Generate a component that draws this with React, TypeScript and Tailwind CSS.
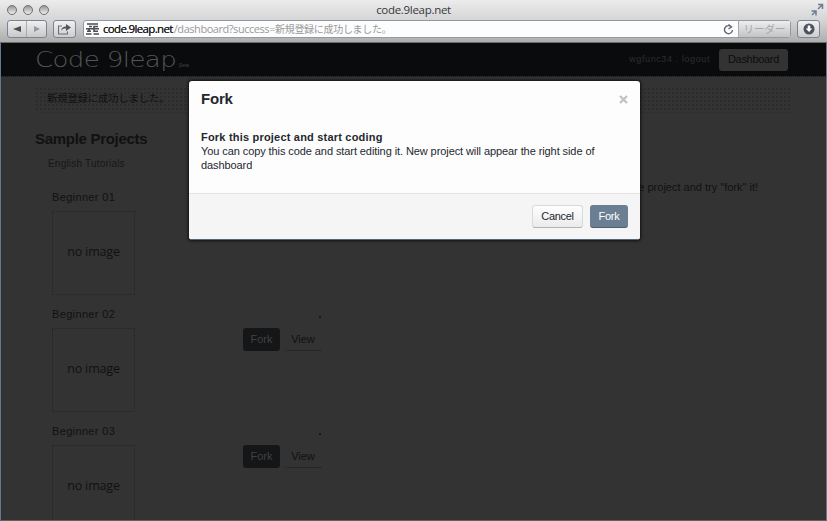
import React from 'react';

const helv = "font-['Liberation_Sans','Noto_Sans_CJK_JP',sans-serif]";
const lucida = "font-['Open_Sans','Noto_Sans_CJK_JP',sans-serif]";

function Chrome() {
  return (
    <header className={`${lucida} flex h-[43px] shrink-0 flex-col border-b border-[#6c6c6c] bg-linear-to-b from-[#ececec] via-[#d4d4d4] to-[#aeaeae]`}>
      <div className="flex h-5 shrink-0 items-center pr-[3px] pl-[7px]">
        <div className="flex w-[60px] gap-[6px]">
          {[0, 1, 2].map((n) => (
            <span key={n} className="h-[10px] w-[10px] rounded-full border-[1.5px] border-[#6d7176] bg-linear-to-b from-[#999] to-[#eee]" />
          ))}
        </div>
        <span className="flex-1 pr-[18px] text-center text-[11.5px] leading-5 font-medium tracking-[-0.3px] text-[#36383d]">code.9leap.net</span>
        <svg width="14" height="14" viewBox="0 0 14 14" className="ml-[32px]" fill="none" stroke="#6e7d91" strokeWidth="1.5">
          <path d="M8 6l4-4M8 1.5h4.5V6M6 8l-4 4M1.5 8H6v4.5" />
        </svg>
      </div>
      <div className="flex h-[18px] items-center px-[7px]">
        <div className="flex h-[18px] w-10 rounded-[3px] border border-[#75859a] bg-linear-to-b from-[#efefef] to-[#c9c9c9]">
          <span className="flex flex-1 items-center justify-center border-r border-[#aaa]">
            <svg width="8" height="8" viewBox="0 0 8 8"><path d="M8 1v6L0 4z" fill="#4a5058" /></svg>
          </span>
          <span className="flex flex-1 items-center justify-center">
            <svg width="8" height="8" viewBox="0 0 8 8"><path d="M1 1v6l6-3z" fill="#929aa3" /></svg>
          </span>
        </div>
        <div className="ml-[6px] flex h-[18px] w-[23px] items-center justify-center rounded-[3px] border border-[#75859a] bg-linear-to-b from-[#f0f0f0] to-[#cecece]">
          <svg width="15" height="12" viewBox="0 0 15 12" fill="none" stroke="#687079" strokeWidth="1.1">
            <path d="M5 3H1.500v8h9V8.500" />
            <path d="M4 8c.4-3 2-4.500 5-4.500V1l5 3.500L9 8V5.500C6.500 5.500 5 6 4 8z" fill="#4f555e" stroke="none" />
          </svg>
        </div>
        <div className="ml-[7px] flex h-[18px] w-[709px] items-center rounded-[3px] border border-[#8e9aaa] bg-[#fdfdfd]">
          <svg width="13" height="12" viewBox="0 0 13 12" className="ml-[2px]" fill="none" stroke="#4a4d52" strokeWidth="1.6">
            <path d="M1 1h11M3 3.500h3M0 5.800h13M3 5.500v2.500M1 8.300h4M0 11h5.500" />
            <path d="M12 3.500H8v2M12 8.300H8V6M7.500 11H13" />
          </svg>
          <span className="ml-[4px] flex items-center text-[11.5px] leading-4 whitespace-nowrap text-[#222]">
            <span className="tracking-[-0.65px] [text-shadow:0_0_0.5px_#222]">code.9leap.net</span>
            <span className="ml-px text-[11px] tracking-[-0.45px] text-[#999]">/dashboard?success=</span>
            <span className="text-[10px] tracking-[-0.3px] text-[#999]">新規登録に成功しました。</span>
          </span>
          <svg width="11" height="11" viewBox="0 0 11 11" className="ml-auto" fill="none" stroke="#596675" strokeWidth="1.400">
            <path d="M8.500 3A4 4 0 1 0 9.500 6M5.500 .5L8.500 3 5.500 5" />
          </svg>
          <span className="ml-[4px] flex h-4 w-[52px] items-center justify-center border-l border-[#aaa] bg-linear-to-b from-[#eee] to-[#c4c4c4] text-[10.5px] leading-none text-[#a4a8ac]">リーダー</span>
        </div>
        <div className="ml-[6px] flex h-[18px] w-[23px] items-center justify-center rounded-[3px] border border-[#75859a] bg-linear-to-b from-[#f0f0f0] to-[#cecece]">
          <svg width="12" height="12" viewBox="0 0 12 12">
            <circle cx="6" cy="6" r="5.500" fill="#4c535d" />
            <path d="M4.700 2.500h2.600v3h2L6 9 2.700 5.500h2z" fill="#fff" />
          </svg>
        </div>
      </div>
    </header>
  );
}

function Navbar() {
  return (
    <nav className="flex h-[33px] shrink-0 items-center bg-[#0a0b0c] pr-[38px] pl-[34px]">
      <span className="flex w-[144px] items-center font-['DejaVu_Sans',sans-serif] text-[21px] leading-[30px] font-extralight tracking-[-0.5px] text-[#555]">
        <span className="origin-left scale-x-[1.24] whitespace-nowrap">Code 9leap</span>
      </span>
      <span className="mt-3 text-[5px] text-[#444]">βeta</span>
      <span className="ml-auto text-[9px] tracking-[0.6px] whitespace-nowrap text-[#2e2e2e]">wgfunc34 . logout</span>
      <button className="ml-[9px] h-[22px] w-[69px] rounded-[3px] bg-[#333] text-[11px] tracking-[-0.3px] text-[#0d0d0d]">Dashboard</button>
    </nav>
  );
}

function Project({ id, actions }: { id: string; actions: boolean }) {
  return (
    <div className="flex h-[117px] shrink-0">
      <div className="w-[191px]">
        <h3 className="text-[11px] leading-4 tracking-[0.35px] text-[#101112]">Beginner {id}</h3>
        <div className="mt-[6px] flex h-[84px] w-[83px] items-center justify-center border border-dotted border-[#242424] pb-[2px] font-['Open_Sans',sans-serif] text-[12.5px] tracking-[-0.15px] text-[#101112]">
          no image
        </div>
      </div>
      {actions && (
        <div className="relative flex gap-[4px] pt-[22px]">
          <span className="absolute top-[10px] left-[76px] h-0.5 w-0.5 bg-[#191919]" />
          <button className="h-[23px] w-[37px] rounded-[3px] bg-[#151617] text-[11px] text-[#414141]">Fork</button>
          <button className="h-[23px] w-[38px] rounded-[3px] border-b border-dotted border-[#1c1c1c] text-[11px] text-[#101112]">View</button>
        </div>
      )}
    </div>
  );
}

function Modal() {
  return (
    <div role="dialog" className="absolute top-[81px] left-[189px] flex h-[159px] w-[451px] flex-col overflow-hidden rounded-[3px] border-b border-[#536578] bg-[#fdfdfd] text-[#24282e] shadow-[0_0_3px_1px_#101010]">
      <div className="flex h-[37px] items-center justify-between px-[12px]">
        <h2 className="text-[15px] font-bold tracking-[-0.2px]">Fork</h2>
        <svg width="9" height="9" viewBox="0 0 9 9" stroke="#c1c1c1" strokeWidth="2.200"><path d="M1 1l7 7M8 1L1 8" /></svg>
      </div>
      <div className="h-[75px] px-[12px] pt-[12px] text-[11px] leading-[14px]">
        <strong className="block text-[11px] tracking-[0.2px]">Fork this project and start coding</strong>
        <p className="tracking-[-0.085px] whitespace-nowrap">You can copy this code and start editing it. New project will appear the right side of<br />dashboard</p>
      </div>
      <div className="flex flex-1 justify-end gap-[7px] border-t border-[#e2e2e2] bg-[#f5f5f5] pt-[11px] pr-[12px]">
        <button className="h-[23px] w-[51px] rounded-[3px] border border-[#d9d9d9] border-b-[#b4b4b4] bg-linear-to-b from-[#fefefe] to-[#ebebeb] text-[11px] tracking-[-0.3px]">Cancel</button>
        <button className="h-[23px] w-[38px] rounded-[3px] border-b border-[#4c5d70] bg-[#6c7e91] text-[11px] tracking-[-0.3px] text-white">Fork</button>
      </div>
    </div>
  );
}

export default function App() {
  return (
    <div className={`${helv} relative flex h-[521px] w-[827px] flex-col overflow-hidden bg-[#333]`}>
      <Chrome />
      <div className="flex min-h-0 flex-1 flex-col border-x border-b border-[#65788d] border-b-[#665f62]">
        <Navbar />
        <main className="flex min-h-0 flex-1 flex-col overflow-hidden border-t border-dotted border-[#171717] pl-[34px]">
          <div className="mt-[10px] flex h-[26px] w-[757px] shrink-0 items-center rounded bg-[radial-gradient(circle,#1c1d1e_0.500px,transparent_0.800px)] bg-size-[4px_4px] pb-[3px] pl-[12px] text-[10.3px] tracking-[-0.1px] text-[#101112]">
            新規登録に成功しました。
          </div>
          <h1 className="mt-[17px] h-[18px] shrink-0 text-[15px] leading-[18px] font-bold tracking-[-0.3px] text-[#101112]">Sample Projects</h1>
          <p className="mt-[8px] ml-[13px] h-[16px] shrink-0 text-[10px] leading-4 tracking-[0.2px] text-[#161718]">English Tutorials</p>
          <div className="flex pt-[17px] pl-[17px]">
            <section className="flex w-[500px] flex-col">
              <Project id="01" actions={false} />
              <Project id="02" actions />
              <Project id="03" actions />
            </section>
            <p className="-mt-[10px] w-[206px] text-right text-[11px] leading-4 whitespace-nowrap text-[#101112]">choose project and try "fork" it!</p>
          </div>
        </main>
      </div>
      <Modal />
    </div>
  );
}
